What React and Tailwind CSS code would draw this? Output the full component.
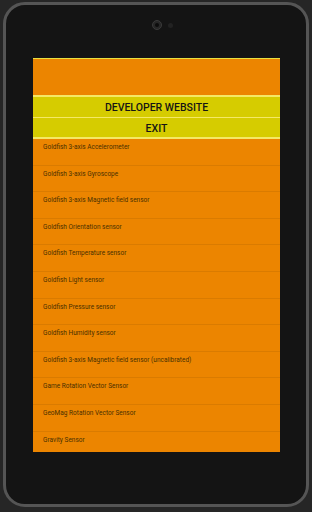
const SENSORS = [
  'Goldfish 3-axis Accelerometer',
  'Goldfish 3-axis Gyroscope',
  'Goldfish 3-axis Magnetic field sensor',
  'Goldfish Orientation sensor',
  'Goldfish Temperature sensor',
  'Goldfish Light sensor',
  'Goldfish Pressure sensor',
  'Goldfish Humidity sensor',
  'Goldfish 3-axis Magnetic field sensor (uncalibrated)',
  'Game Rotation Vector Sensor',
  'GeoMag Rotation Vector Sensor',
  'Gravity Sensor',
]

export default function App() {
  return (
    <div
      className="w-[312px] h-[512px] bg-[#262626] overflow-hidden pt-[2px] pl-[3px]"
      style={{ fontFamily: 'Roboto, "Liberation Sans", sans-serif' }}
    >
      <div className="w-[306px] h-[505px] rounded-[22px] border-[3px] border-[#555555] bg-[#141414] flex flex-col pl-[27px] pr-[26px]">
        {/* camera */}
        <div className="h-[10px] mt-[15px] flex justify-center">
          <div className="relative w-[10px] h-[10px] rounded-full bg-[#262626] border border-[#3a3a3a] flex items-center justify-center">
            <div className="w-[4px] h-[4px] rounded-full bg-[#0c0c0c]" />
            <div className="absolute left-[15px] top-[2px] w-[5px] h-[5px] rounded-full bg-[#222222]" />
          </div>
        </div>

        {/* screen */}
        <div className="mt-[28px] h-[394px] bg-[#ec8500] border-t border-[#e8e040] flex flex-col overflow-hidden">
          <div className="h-[36px] shrink-0" />
          <div className="h-[2px] shrink-0 bg-[#f4e865]" />
          <div className="h-[20px] shrink-0 bg-[#d6cc00] flex items-center justify-center pt-[2px] text-[10.5px] font-medium text-[#141414]">
            DEVELOPER WEBSITE
          </div>
          <div className="h-[1px] shrink-0 bg-[#f4e865]" />
          <div className="h-[19px] shrink-0 bg-[#d6cc00] flex items-center justify-center pt-[2px] text-[10.5px] font-medium text-[#141414]">
            EXIT
          </div>
          <div className="h-[2px] shrink-0 bg-[#f4e865]" />
          <div className="flex flex-col">
            {SENSORS.map((s) => (
              <div
                key={s}
                className="h-[26.6px] shrink-0 border-b border-[#da7b00] pl-[10px] pt-[5px] text-[6.5px] leading-[7px] text-[#4a3000]"
              >
                {s}
              </div>
            ))}
          </div>
        </div>
      </div>
    </div>
  )
}
